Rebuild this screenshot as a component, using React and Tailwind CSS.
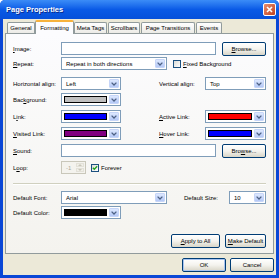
import React from 'react';

const font = "font-['Liberation_Sans',Arial,sans-serif]";

function Arrow({ disabled }) {
    return (
        <div className={`w-[10px] h-full flex items-center justify-center rounded-[1px] border ${disabled ? 'border-[#e3e1d8] bg-[#f0efe8]' : 'border-[#c6d5f8] bg-linear-to-b from-[#dde8fe] to-[#b4c8f6]'}`}>
            <svg width="6" height="4" viewBox="0 0 6 4">
                <path d="M0.6 0.6 L3 3 L5.4 0.6" fill="none" stroke={disabled ? '#c9c7ba' : '#4d6185'} strokeWidth="1.3" />
            </svg>
        </div>
    );
}

function Combo({ w, children }) {
    return (
        <div className={`h-[13px] border border-[#7f9db9] bg-white flex p-px ${w}`}>
            <div className="flex-1 flex items-center pl-[3px] overflow-hidden whitespace-nowrap">{children}</div>
            <Arrow />
        </div>
    );
}

function ColorCombo({ color, w = 'w-[60px]' }) {
    return (
        <div className={`h-[13px] border border-[#7f9db9] bg-white flex p-px ${w}`}>
            <div className="flex-1 p-px mr-px">
                <div className={`h-full border border-black ${color}`} />
            </div>
            <Arrow />
        </div>
    );
}

function Input({ w, children }) {
    return (
        <div className={`h-[13px] border border-[#7f9db9] bg-white flex items-center pl-[3px] ${w}`}>{children}</div>
    );
}

function Button({ w, children, primary }) {
    return (
        <div className={`h-[14px] ${w} rounded-[2px] border border-[#003c74] bg-linear-to-b from-[#ffffff] via-[#f4f3ee] to-[#d8d5c7] flex items-center justify-center ${primary ? 'shadow-[inset_0_0_0_1px_#a8c4f0]' : ''}`}>
            {children}
        </div>
    );
}

function Check({ checked }) {
    return (
        <div className="w-[8px] h-[8px] border border-[#1c5180] bg-linear-to-br from-[#dcdcd7] to-white flex items-center justify-center">
            {checked && (
                <svg width="6" height="6" viewBox="0 0 6 6">
                    <path d="M0.8 2.8 L2.3 4.3 L5.2 1.2" fill="none" stroke="#21a121" strokeWidth="1.3" />
                </svg>
            )}
        </div>
    );
}

function Label({ w = 'w-[48px]', children }) {
    return <div className={`${w} shrink-0 whitespace-nowrap`}>{children}</div>;
}

const tabs = [
    { name: 'General', w: 'w-[28px]' },
    { name: 'Formatting', w: 'w-[39px]', active: true },
    { name: 'Meta Tags', w: 'w-[33px]' },
    { name: 'Scrollbars', w: 'w-[32px]' },
    { name: 'Page Transitions', w: 'w-[54px]' },
    { name: 'Events', w: 'w-[26px]' },
];

export default function App() {
    return (
        <div className={`w-[279px] h-[278px] bg-white text-[6px] leading-none text-black ${font}`}>
            <div className="w-full h-full rounded-t-[5px] bg-[#0a47d6] flex flex-col overflow-hidden">
                {/* title bar */}
                <div className="h-[19px] shrink-0 bg-linear-to-b from-[#3b8cf7] via-[#0a5ae6] to-[#0650da] flex items-center pl-[6px] pr-[3px]">
                    <span className="text-white font-bold text-[7.5px] [text-shadow:1px_1px_0_#0a2a8c]">Page Properties</span>
                    <div className="ml-auto w-[13px] h-[13px] rounded-[2px] border border-white bg-linear-to-br from-[#e88c6c] to-[#c2411c] flex items-center justify-center">
                        <svg width="7" height="7" viewBox="0 0 7 7">
                            <path d="M1 1 L6 6 M6 1 L1 6" stroke="white" strokeWidth="1.6" />
                        </svg>
                    </div>
                </div>

                {/* client */}
                <div className="flex-1 mx-[3px] mb-[3px] bg-[#ece9d8] flex flex-col">
                    {/* tabs */}
                    <div className="h-[14px] flex items-end pl-[4px] gap-px">
                        {tabs.map((t) =>
                            t.active ? (
                                <div key={t.name} className={`${t.w} h-[14px] -mx-px relative z-10 -mb-px bg-[#fcfcfe] border-x border-[#919b9c] rounded-t-[2px] border-t-2 border-t-[#f7b23c] flex items-center justify-center`}>
                                    {t.name}
                                </div>
                            ) : (
                                <div key={t.name} className={`${t.w} h-[11px] bg-linear-to-b from-white to-[#ecebe6] border border-b-0 border-[#919b9c] rounded-t-[2px] flex items-center justify-center whitespace-nowrap`}>
                                    {t.name}
                                </div>
                            )
                        )}
                    </div>

                    {/* panel */}
                    <div className="mx-[2px] h-[221px] shrink-0 border border-[#919b9c] bg-linear-to-b from-[#fcfcfe] to-[#f4f3ee] flex flex-col px-[7px] pt-[8px] pb-[5px]">
                        <div className="h-[13px] flex items-center">
                            <Label><u>I</u>mage:</Label>
                            <Input w="w-[155px]" />
                            <div className="ml-[6px]"><Button w="w-[44px]"><u>B</u>rowse...</Button></div>
                        </div>
                        <div className="h-[13px] mt-[2px] flex items-center">
                            <Label><u>R</u>epeat:</Label>
                            <Combo w="w-[106px]">Repeat in both directions</Combo>
                            <div className="ml-[6px]"><Check /></div>
                            <span className="ml-[2px]"><u>F</u>ixed Background</span>
                        </div>
                        <div className="h-[13px] mt-[7px] flex items-center">
                            <Label>Horizontal align:</Label>
                            <Combo w="w-[60px]">Left</Combo>
                            <div className="ml-[38px]"><Label w="w-[46px]">Vertical ali<u>g</u>n:</Label></div>
                            <Combo w="w-[61px]">Top</Combo>
                        </div>
                        <div className="h-[13px] mt-[3px] flex items-center">
                            <Label>Bac<u>k</u>ground:</Label>
                            <ColorCombo color="bg-[#c0c0c0]" />
                        </div>
                        <div className="h-[13px] mt-[4px] flex items-center">
                            <Label>L<u>i</u>nk:</Label>
                            <ColorCombo color="bg-[#0000ff]" />
                            <div className="ml-[38px]"><Label w="w-[46px]"><u>A</u>ctive Link:</Label></div>
                            <ColorCombo color="bg-[#ff0000]" w="w-[61px]" />
                        </div>
                        <div className="h-[13px] mt-[4px] flex items-center">
                            <Label><u>V</u>isited Link:</Label>
                            <ColorCombo color="bg-[#800080]" />
                            <div className="ml-[38px]"><Label w="w-[46px]"><u>H</u>over Link:</Label></div>
                            <ColorCombo color="bg-[#0000ff]" w="w-[61px]" />
                        </div>
                        <div className="h-[13px] mt-[4px] flex items-center">
                            <Label><u>S</u>ound:</Label>
                            <Input w="w-[155px]" />
                            <div className="ml-[6px]"><Button w="w-[44px]">Bro<u>w</u>se...</Button></div>
                        </div>
                        <div className="h-[13px] mt-[4px] flex items-center">
                            <Label>L<u>o</u>op:</Label>
                            <div className="w-[25px] h-[13px] border border-[#c9c7ba] bg-[#f4f3ee] flex p-px">
                                <div className="flex-1 flex items-center pl-[3px] text-[#aca899]">-1</div>
                                <div className="w-[8px] flex flex-col gap-px">
                                    <div className="flex-1 border border-[#e3e1d8] bg-[#f0efe8] flex items-center justify-center">
                                        <svg width="4" height="2" viewBox="0 0 4 2"><path d="M0 2 L2 0 L4 2 Z" fill="#c9c7ba" /></svg>
                                    </div>
                                    <div className="flex-1 border border-[#e3e1d8] bg-[#f0efe8] flex items-center justify-center">
                                        <svg width="4" height="2" viewBox="0 0 4 2"><path d="M0 0 L2 2 L4 0 Z" fill="#c9c7ba" /></svg>
                                    </div>
                                </div>
                            </div>
                            <div className="ml-[5px]"><Check checked /></div>
                            <span className="ml-[2px]">Forever</span>
                        </div>

                        <div className="mt-[9px] h-px bg-[#d0d0bf]" />
                        <div className="h-px bg-white" />

                        <div className="h-[13px] mt-[6px] flex items-center">
                            <Label>Default Font:</Label>
                            <Combo w="w-[106px]">Arial</Combo>
                            <div className="ml-[17px]"><Label w="w-[45px]">Default Size:</Label></div>
                            <Combo w="w-[37px]">10</Combo>
                        </div>
                        <div className="h-[13px] mt-[2px] flex items-center">
                            <Label>Default Color:</Label>
                            <ColorCombo color="bg-black" />
                        </div>

                        <div className="mt-auto flex justify-end gap-[5px]">
                            <Button w="w-[49px]"><u>A</u>pply to All</Button>
                            <Button w="w-[41px]"><u>M</u>ake Default</Button>
                        </div>
                    </div>

                    {/* dialog buttons */}
                    <div className="flex-1 flex items-start justify-end pt-[4px] pr-[2px] gap-[4px]">
                        <Button w="w-[44px]" primary>OK</Button>
                        <Button w="w-[44px]">Cancel</Button>
                    </div>
                </div>
            </div>
        </div>
    );
}
